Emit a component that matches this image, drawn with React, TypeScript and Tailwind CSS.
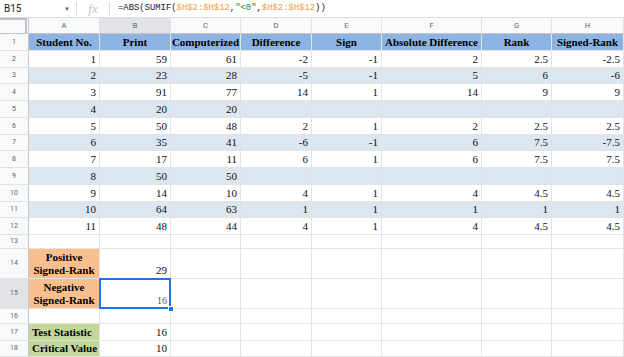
import React from "react";

const COLW = ["w-[71px]", "w-[71px]", "w-[70px]", "w-[71px]", "w-[70px]", "w-[100px]", "w-[70px]", "w-[72px]"];
const LETTERS = ["A", "B", "C", "D", "E", "F", "G", "H"];
const HEADERS = ["Student No.", "Print", "Computerized", "Difference", "Sign", "Absolute Difference", "Rank", "Signed-Rank"];
const DATA: (string | number)[][] = [
  [1, 59, 61, -2, -1, 2, 2.5, -2.5],
  [2, 23, 28, -5, -1, 5, 6, -6],
  [3, 91, 77, 14, 1, 14, 9, 9],
  [4, 20, 20, "", "", "", "", ""],
  [5, 50, 48, 2, 1, 2, 2.5, 2.5],
  [6, 35, 41, -6, -1, 6, 7.5, -7.5],
  [7, 17, 11, 6, 1, 6, 7.5, 7.5],
  [8, 50, 50, "", "", "", "", ""],
  [9, 14, 10, 4, 1, 4, 4.5, 4.5],
  [10, 64, 63, 1, 1, 1, 1, 1],
  [11, 48, 44, 4, 1, 4, 4.5, 4.5],
];
const DATA_H = ["h-[17px]", "h-[17px]", "h-[16px]", "h-[17px]", "h-[17px]", "h-[17px]", "h-[16px]", "h-[17px]", "h-[17px]", "h-[17px]", "h-[16px]", "h-[17px]"];

const serif = "font-['Liberation_Serif','Times_New_Roman',serif]";
const sans = "font-['Roboto','Liberation_Sans',sans-serif]";

function RowHead({ n, h, sel }: { n: number; h: string; sel?: boolean }) {
  return (
    <div
      className={`${h} w-[29px] shrink-0 flex items-center justify-center border-r border-r-[#c7c7c7] border-b border-b-[#e2e3e3] ${sel ? "bg-[#e1e3e6]" : "bg-[#f8f9fa]"} ${sans} text-[7px] text-[#5f6368]`}
    >
      {n}
    </div>
  );
}

function Cell({
  i,
  h,
  bg = "bg-white",
  children,
  align = "right",
  bold,
}: {
  i: number;
  h: string;
  bg?: string;
  children?: React.ReactNode;
  align?: "right" | "center" | "left";
  bold?: boolean;
}) {
  const j = align === "right" ? "justify-end text-right" : align === "center" ? "justify-center text-center" : "justify-start text-left";
  return (
    <div
      className={`${COLW[i]} ${h} shrink-0 flex items-end ${j} border-r border-b border-[#e2e3e3] ${bg} ${serif} text-[11px] leading-[13px] px-[3px] pb-[1px] ${bold ? "font-bold text-black" : "text-[#111]"}`}
    >
      {children}
    </div>
  );
}

export default function App() {
  return (
    <div className="w-[624px] h-[357px] overflow-hidden bg-white">
      {/* formula bar */}
      <div className={`h-[18px] flex items-center border-b border-[#dadce0] ${sans}`}>
        <div className="w-[76px] shrink-0 flex items-center pl-[4px] pr-[6px] text-[10px] text-[#202124]">
          <span className="flex-1">B15</span>
          <span className="text-[6px] text-[#5f6368]">▼</span>
        </div>
        <div className="w-px h-[13px] bg-[#dadce0]" />
        <div className="w-[32px] shrink-0 flex justify-center font-['Liberation_Serif',serif] italic text-[13px] text-[#c4c7c5] leading-none">
          fx
        </div>
        <div className="w-px h-[13px] bg-[#dadce0]" />
        <div className="pl-[8px] font-['Liberation_Mono',monospace] text-[8.9px] text-[#202124] whitespace-pre">
          =ABS(SUMIF(<span className="text-[#f29a3c]">$H$2:$H$12</span>,<span className="text-[#188038]">"&lt;0"</span>,<span className="text-[#f29a3c]">$H$2:$H$12</span>))
        </div>
      </div>

      {/* column headers */}
      <div className="flex h-[16px]">
        <div className="relative w-[29px] shrink-0 bg-[#f8f9fa] border-r border-b border-[#c7c7c7]">
          <div className="absolute left-0 top-0 w-[27px] h-[2px] bg-[#bdc1c6]" />
          <div className="absolute left-[25px] top-0 w-[2px] h-[15px] bg-[#bdc1c6]" />
        </div>
        {LETTERS.map((l, i) => (
          <div
            key={l}
            className={`${COLW[i]} shrink-0 flex items-center justify-center border-r border-r-[#e2e3e3] border-b border-b-[#c7c7c7] ${i === 1 ? "bg-[#e1e3e6]" : "bg-[#f8f9fa]"} ${sans} text-[7.5px] text-[#5f6368]`}
          >
            {l}
          </div>
        ))}
      </div>

      {/* row 1 */}
      <div className="flex">
        <RowHead n={1} h="h-[17px]" />
        {HEADERS.map((t, i) => (
          <Cell key={i} i={i} h="h-[17px]" bg="bg-[#8db3e2]" align="center" bold>
            <span className="whitespace-nowrap">{t}</span>
          </Cell>
        ))}
      </div>

      {/* data rows */}
      {DATA.map((row, r) => (
        <div className="flex" key={r}>
          <RowHead n={r + 2} h={DATA_H[r + 1]} />
          {row.map((v, i) => (
            <Cell key={i} i={i} h={DATA_H[r + 1]} bg={r % 2 === 1 ? "bg-[#dce6f1]" : "bg-white"}>
              {v}
            </Cell>
          ))}
        </div>
      ))}

      {/* row 13 */}
      <div className="flex">
        <RowHead n={13} h="h-[14px]" />
        {LETTERS.map((l, i) => (
          <Cell key={l} i={i} h="h-[14px]" />
        ))}
      </div>

      {/* row 14 */}
      <div className="flex">
        <RowHead n={14} h="h-[30px]" />
        <Cell i={0} h="h-[30px]" bg="bg-[#fabf8f]" align="center" bold>
          Positive
          <br />
          Signed-Rank
        </Cell>
        <Cell i={1} h="h-[30px]">29</Cell>
        {LETTERS.slice(2).map((l, k) => (
          <Cell key={l} i={k + 2} h="h-[30px]" />
        ))}
      </div>

      {/* row 15 */}
      <div className="flex">
        <RowHead n={15} h="h-[30px]" sel />
        <Cell i={0} h="h-[30px]" bg="bg-[#fabf8f]" align="center" bold>
          Negative
          <br />
          Signed-Rank
        </Cell>
        <div className="relative">
          <Cell i={1} h="h-[30px]">
            <span className="text-[10px] text-[#555]">16</span>
          </Cell>
          <div className="absolute -left-px -top-px w-[72px] h-[31px] border-2 border-[#1a73e8]" />
          <div className="absolute left-[68px] top-[27px] w-[6px] h-[6px] bg-[#1a73e8] border border-white" />
        </div>
        {LETTERS.slice(2).map((l, k) => (
          <Cell key={l} i={k + 2} h="h-[30px]" />
        ))}
      </div>

      {/* row 16 */}
      <div className="flex">
        <RowHead n={16} h="h-[15px]" />
        {LETTERS.map((l, i) => (
          <Cell key={l} i={i} h="h-[15px]" />
        ))}
      </div>

      {/* row 17 */}
      <div className="flex">
        <RowHead n={17} h="h-[17px]" />
        <Cell i={0} h="h-[17px]" bg="bg-[#c4d79b]" align="left" bold>
          <span className="whitespace-nowrap">Test Statistic</span>
        </Cell>
        <Cell i={1} h="h-[17px]">16</Cell>
        {LETTERS.slice(2).map((l, k) => (
          <Cell key={l} i={k + 2} h="h-[17px]" />
        ))}
      </div>

      {/* row 18 */}
      <div className="flex">
        <RowHead n={18} h="h-[16px]" />
        <Cell i={0} h="h-[16px]" bg="bg-[#c4d79b]" align="left" bold>
          <span className="whitespace-nowrap">Critical Value</span>
        </Cell>
        <Cell i={1} h="h-[16px]">10</Cell>
        {LETTERS.slice(2).map((l, k) => (
          <Cell key={l} i={k + 2} h="h-[16px]" />
        ))}
      </div>
    </div>
  );
}
